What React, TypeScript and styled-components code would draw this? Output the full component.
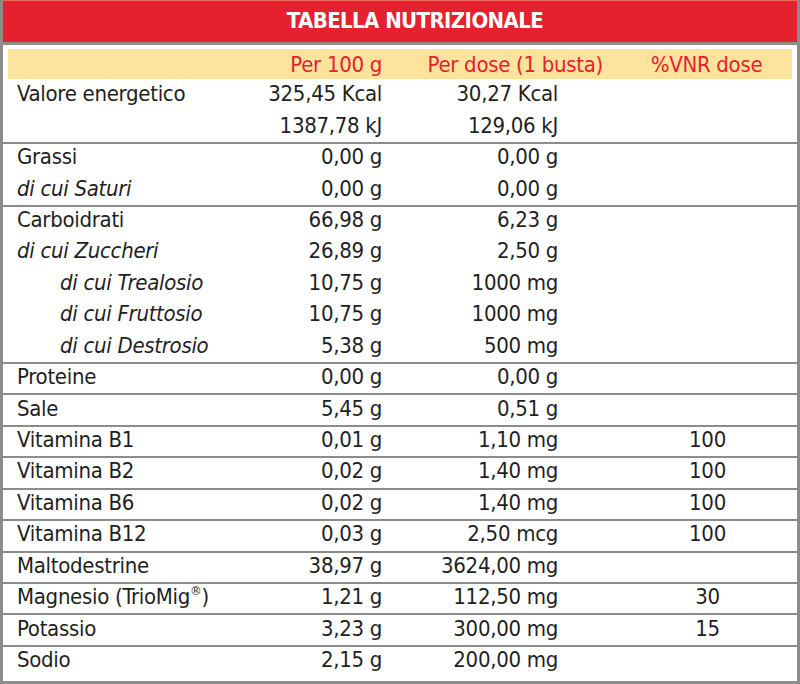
import React from "react";
import styled, { createGlobalStyle } from "styled-components";

const GlobalStyle = createGlobalStyle`
    html, body {
        margin: 0;
        padding: 0;
        background: #ffffff;
    }
    body {
        font-family: "Liberation Sans Narrow", "DejaVu Sans Condensed", "Liberation Sans", sans-serif;
    }
`;

type Row = {
    label: string;
    per100?: string;
    perDose?: string;
    vnr?: string;
    sub?: boolean;
    indent?: boolean;
    reg?: boolean;
};

// ogni gruppo ha una riga di separazione sotto
const groups: Row[][] = [
    [
        { label: "Valore energetico", per100: "325,45 Kcal", perDose: "30,27 Kcal" },
        { label: "", per100: "1387,78 kJ", perDose: "129,06 kJ" },
    ],
    [
        { label: "Grassi", per100: "0,00 g", perDose: "0,00 g" },
        { label: "di cui Saturi", per100: "0,00 g", perDose: "0,00 g", sub: true },
    ],
    [
        { label: "Carboidrati", per100: "66,98 g", perDose: "6,23 g" },
        { label: "di cui Zuccheri", per100: "26,89 g", perDose: "2,50 g", sub: true },
        { label: "di cui Trealosio", per100: "10,75 g", perDose: "1000 mg", sub: true, indent: true },
        { label: "di cui Fruttosio", per100: "10,75 g", perDose: "1000 mg", sub: true, indent: true },
        { label: "di cui Destrosio", per100: "5,38 g", perDose: "500 mg", sub: true, indent: true },
    ],
    [{ label: "Proteine", per100: "0,00 g", perDose: "0,00 g" }],
    [{ label: "Sale", per100: "5,45 g", perDose: "0,51 g" }],
    [{ label: "Vitamina B1", per100: "0,01 g", perDose: "1,10 mg", vnr: "100" }],
    [{ label: "Vitamina B2", per100: "0,02 g", perDose: "1,40 mg", vnr: "100" }],
    [{ label: "Vitamina B6", per100: "0,02 g", perDose: "1,40 mg", vnr: "100" }],
    [{ label: "Vitamina B12", per100: "0,03 g", perDose: "2,50 mcg", vnr: "100" }],
    [{ label: "Maltodestrine", per100: "38,97 g", perDose: "3624,00 mg" }],
    [{ label: "Magnesio (TrioMig", per100: "1,21 g", perDose: "112,50 mg", vnr: "30", reg: true }],
    [{ label: "Potassio", per100: "3,23 g", perDose: "300,00 mg", vnr: "15" }],
    [{ label: "Sodio", per100: "2,15 g", perDose: "200,00 mg" }],
];

const Frame = styled.div`
    width: 800px;
    height: 684px;
    box-sizing: border-box;
    border: 3px solid #8c8c8c;
    border-top: none;
    display: flex;
    flex-direction: column;
    overflow: hidden;
`;

const Title = styled.div`
    height: 39px;
    margin: 0 -3px;
    background: #e5212f;
    border-top: 1px solid #ee6a55;
    border-bottom: 3px solid #8c8c8c;
    box-sizing: content-box;
    display: flex;
    align-items: center;
    justify-content: center;
    padding: 0 0 2px 30px;
    color: #ffffff;
    font-weight: bold;
    font-size: 22px;
    letter-spacing: -0.6px;
`;

const HeadRow = styled.div`
    margin: 4px 5px 0;
    height: 30px;
    background: #fee39d;
    display: grid;
    grid-template-columns: 242px 132px 221px 1fr;
    align-items: center;
    color: #e5212f;
    font-size: 22px;
    letter-spacing: -0.3px;
`;

const HeadCell = styled.div<{ $center?: boolean }>`
    text-align: ${(p) => (p.$center ? "center" : "right")};
    padding-left: ${(p) => (p.$center ? "18px" : "0")};
    white-space: nowrap;
`;

const Group = styled.div<{ $last?: boolean }>`
    border-bottom: ${(p) => (p.$last ? "none" : "2px solid #8c8c8c")};
    margin-bottom: -2px;
`;

const Line = styled.div`
    height: 31.45px;
    box-sizing: border-box;
    padding-bottom: 2px;
    display: grid;
    grid-template-columns: 247px 132px 176px 1fr;
    align-items: center;
    color: #1f1f1f;
    font-size: 22px;
    letter-spacing: -0.3px;
    white-space: nowrap;
`;

const Label = styled.div<{ $sub?: boolean; $indent?: boolean }>`
    padding-left: ${(p) => (p.$indent ? "57px" : "14px")};
    font-style: ${(p) => (p.$sub ? "italic" : "normal")};
`;

const Num = styled.div`
    text-align: right;
`;

const Vnr = styled.div`
    text-align: center;
    padding-left: 60px;
`;

const Reg = styled.sup`
    font-size: 13px;
    vertical-align: 9px;
    line-height: 0;
`;

export default function App() {
    return (
        <>
            <GlobalStyle />
            <Frame>
                <Title>TABELLA NUTRIZIONALE</Title>
                <HeadRow>
                    <div />
                    <HeadCell>Per 100 g</HeadCell>
                    <HeadCell>Per dose (1 busta)</HeadCell>
                    <HeadCell $center>%VNR dose</HeadCell>
                </HeadRow>
                {groups.map((rows, gi) => (
                    <Group key={gi} $last={gi === groups.length - 1}>
                        {rows.map((r, ri) => (
                            <Line key={ri}>
                                <Label $sub={r.sub} $indent={r.indent}>
                                    {r.label}
                                    {r.reg && (
                                        <>
                                            <Reg>®</Reg>)
                                        </>
                                    )}
                                </Label>
                                <Num>{r.per100}</Num>
                                <Num>{r.perDose}</Num>
                                <Vnr>{r.vnr}</Vnr>
                            </Line>
                        ))}
                    </Group>
                ))}
            </Frame>
        </>
    );
}
